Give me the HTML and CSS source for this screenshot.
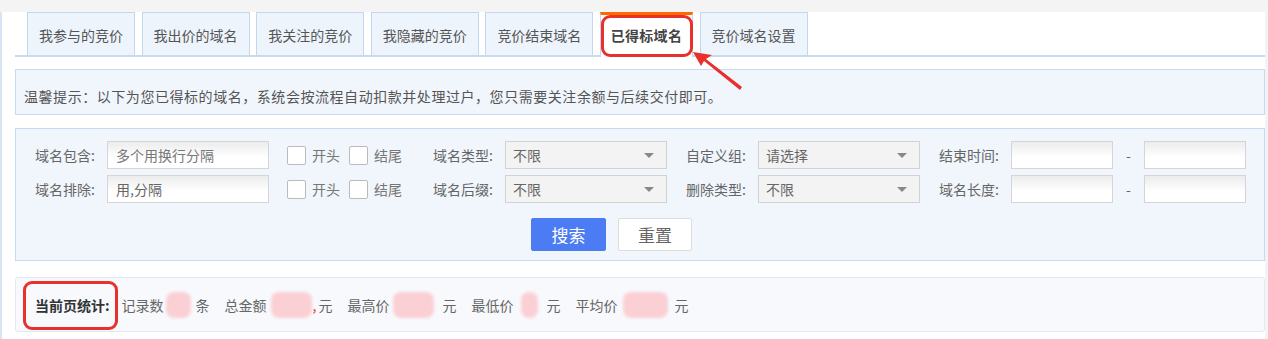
FILE: index.html
```html
<!DOCTYPE html>
<html lang="zh-CN">
<head>
<meta charset="UTF-8">
<title>已得标域名</title>
<link rel="stylesheet" href="styles.css">
</head>
<body>
<div class="page">
    <div class="tabs">
        <div class="tab">我参与的竞价</div>
        <div class="tab">我出价的域名</div>
        <div class="tab">我关注的竞价</div>
        <div class="tab">我隐藏的竞价</div>
        <div class="tab">竞价结束域名</div>
        <div class="tab active">已得标域名</div>
        <div class="tab">竞价域名设置</div>
    </div>

    <div class="tip">温馨提示：以下为您已得标的域名，系统会按流程自动扣款并处理过户，您只需要关注余额与后续交付即可。</div>

    <div class="search">
        <div class="grid">
            <label class="lbl">域名包含:</label>
            <div class="input"><span class="ph">多个用换行分隔</span></div>
            <div class="checks">
                <span class="cb"></span><span>开头</span>
                <span class="cb"></span><span>结尾</span>
            </div>
            <label class="lbl">域名类型:</label>
            <div class="select">不限</div>
            <label class="lbl wide">自定义组:</label>
            <div class="select">请选择</div>
            <label class="lbl wide">结束时间:</label>
            <div class="input"></div>
            <div class="dash">-</div>
            <div class="input"></div>

            <label class="lbl">域名排除:</label>
            <div class="input"><span class="val">用,分隔</span></div>
            <div class="checks">
                <span class="cb"></span><span>开头</span>
                <span class="cb"></span><span>结尾</span>
            </div>
            <label class="lbl">域名后缀:</label>
            <div class="select">不限</div>
            <label class="lbl wide">删除类型:</label>
            <div class="select">不限</div>
            <label class="lbl wide">域名长度:</label>
            <div class="input"></div>
            <div class="dash">-</div>
            <div class="input"></div>
        </div>
        <div class="buttons">
            <button class="btn primary">搜索</button>
            <button class="btn">重置</button>
        </div>
    </div>

    <div class="stats">
        <b>当前页统计:</b>
        <span>记录数</span><span class="blur count"></span><span>条</span>
        <span class="sp">总金额</span><span class="blur total"></span><span class="comma">,</span><span>元</span>
        <span class="sp">最高价</span><span class="blur max"></span><span>元</span>
        <span class="sp">最低价</span><span class="blur min"></span><span>元</span>
        <span class="sp">平均价</span><span class="blur avg"></span><span>元</span>
    </div>
</div>

<div class="mark mark-tab"></div>
<div class="mark mark-stats"></div>
<svg class="arrow" width="70" height="60" viewBox="0 0 70 60">
    <path d="M2 1 L21 4 L15 8 L51 36 L49 39 L13 10 L10 15 Z" fill="#e8302c"/>
</svg>
</body>
</html>
```

FILE: styles.css
```css
body {
    margin: 0;
    background-color: #f4f4f4;
    font-family: "Noto Sans CJK SC", "Noto Sans", sans-serif;
    font-size: 14px;
    color: #666;
}
.page {
    margin-top: 12px;
    width: 1250px;
    height: 327px;
    padding-left: 13px;
    background-color: #fff;
    border-left: 2px solid #d6e4f4;
    box-sizing: content-box;
}
.tabs {
    display: flex;
    gap: 6.6px;
    padding-left: 12px;
    height: 43px;
    border-bottom: 2px solid #c6dbf0;
}
.tab {
    width: 108px;
    height: 43px;
    box-sizing: border-box;
    border: 1px solid #c3d7ee;
    border-bottom: none;
    background-color: #eef4fc;
    color: #555;
    text-align: center;
    line-height: 44px;
    white-space: nowrap;
}
.tab.active {
    width: 93px;
    height: 45px;
    background-color: #fff;
    border-top: 3px solid #ff6a00;
    font-weight: bold;
    color: #444;
    line-height: 40px;
    letter-spacing: 0.3px;
}
.tip {
    margin-top: 12px;
    height: 46px;
    box-sizing: border-box;
    border: 1px solid #c6dbf0;
    background-color: #f1f6fd;
    padding: 15px 8px 0;
    line-height: 22px;
    color: #555;
    letter-spacing: 0.55px;
}
.search {
    margin-top: 13px;
    height: 133px;
    box-sizing: border-box;
    border: 1px solid #c6dbf0;
    background-color: #f1f6fd;
    padding: 12px 0 0 19px;
}
.grid {
    display: grid;
    grid-template-columns: 72px 162px 164px 72px 162px 91px 162px 91px 102px 31px 102px;
    grid-auto-rows: 28px;
    row-gap: 6px;
    align-items: center;
}
.lbl {
    color: #666;
    white-space: nowrap;
}
.lbl.wide {
    padding-left: 19px;
}
.input {
    height: 28px;
    box-sizing: border-box;
    border: 1px solid #d5d5d5;
    background: linear-gradient(#ececec, #fff 60%);
    padding-left: 8px;
    line-height: 26px;
    color: #666;
}
.ph {
    color: #777;
}
.select {
    position: relative;
    height: 28px;
    box-sizing: border-box;
    border: 1px solid #d2d2d2;
    background-color: #f3f3f3;
    padding-left: 7px;
    line-height: 26px;
    color: #666;
}
.select::after {
    content: "";
    position: absolute;
    right: 12px;
    top: 11px;
    border: 5px solid transparent;
    border-top: 5px solid #888;
    border-bottom: none;
}
.checks {
    display: flex;
    align-items: center;
    padding-left: 18px;
    color: #777;
}
.cb {
    width: 19px;
    height: 19px;
    box-sizing: border-box;
    border: 1px solid #bbb;
    border-radius: 2px;
    background-color: #fff;
    margin-right: 6px;
}
.cb + span {
    margin-right: 9px;
}
.dash {
    text-align: center;
    color: #666;
}
.buttons {
    display: flex;
    gap: 12px;
    margin-top: 15px;
    padding-left: 496px;
}
.btn {
    width: 74px;
    height: 33px;
    border: 1px solid #ddd;
    border-radius: 2px;
    background-color: #fff;
    color: #666;
    font-family: inherit;
    font-size: 17px;
    cursor: pointer;
}
.btn.primary {
    width: 75px;
    border-color: #4c7cf4;
    background-color: #4c7cf4;
    color: #fff;
}
.stats {
    margin-top: 16px;
    height: 55px;
    box-sizing: border-box;
    border: 1px solid #e0e9f4;
    border-radius: 3px;
    background-color: #f7f9fd;
    padding-left: 19px;
    display: flex;
    align-items: center;
    color: #666;
}
.stats b {
    color: #333;
    margin-right: 12px;
}
.stats .sp {
    margin-left: 15px;
}
.blur {
    display: inline-block;
    height: 26px;
    border-radius: 8px;
    background-color: #fbd0d5;
    filter: blur(1.5px);
}
.blur.count {
    width: 25px;
    margin: 0 5px 0 2px;
}
.blur.total {
    width: 41px;
    margin: 0 1px 0 4px;
}
.blur.max {
    width: 41px;
    margin: 0 8px 0 4px;
}
.blur.min {
    width: 17px;
    margin: 0 8px 0 8px;
}
.blur.avg {
    width: 45px;
    margin: 0 6px 0 6px;
}
.comma {
    color: #e8302c;
    margin-right: 2px;
}
.mark {
    position: absolute;
    border: 3px solid #e8302c;
    border-radius: 9px;
    box-sizing: border-box;
}
.mark-tab {
    left: 601px;
    top: 15px;
    width: 92px;
    height: 42px;
}
.mark-stats {
    left: 23px;
    top: 281px;
    width: 95px;
    height: 49px;
}
.arrow {
    position: absolute;
    left: 691px;
    top: 51px;
}
```
